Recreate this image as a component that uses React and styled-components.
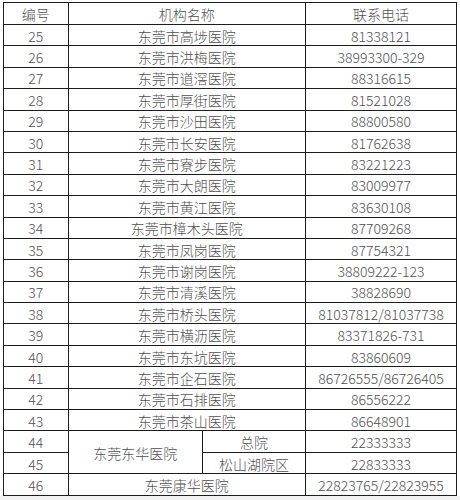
import React from 'react';
import styled, {createGlobalStyle} from 'styled-components';

const GlobalStyle = createGlobalStyle`
    html, body {
        margin: 0;
        padding: 0;
        background: #ffffff;
    }
`

const rowsBefore = [
    ['25', '东莞市高埗医院', '81338121'],
    ['26', '东莞市洪梅医院', '38993300-329'],
    ['27', '东莞市道滘医院', '88316615'],
    ['28', '东莞市厚街医院', '81521028'],
    ['29', '东莞市沙田医院', '88800580'],
    ['30', '东莞市长安医院', '81762638'],
    ['31', '东莞市寮步医院', '83221223'],
    ['32', '东莞市大朗医院', '83009977'],
    ['33', '东莞市黄江医院', '83630108'],
    ['34', '东莞市樟木头医院', '87709268'],
    ['35', '东莞市凤岗医院', '87754321'],
    ['36', '东莞市谢岗医院', '38809222-123'],
    ['37', '东莞市清溪医院', '38828690'],
    ['38', '东莞市桥头医院', '81037812/81037738'],
    ['39', '东莞市横沥医院', '83371826-731'],
    ['40', '东莞市东坑医院', '83860609'],
    ['41', '东莞市企石医院', '86726555/86726405'],
    ['42', '东莞市石排医院', '86556222'],
    ['43', '东莞市茶山医院', '86648901'],
]

export default function App() {
    return (
        <Page>
            <GlobalStyle />
            <Table>
                <colgroup>
                    <col style={{width: 64.5}} />
                    <col style={{width: 134.5}} />
                    <col style={{width: 103}} />
                    <col style={{width: 151}} />
                </colgroup>
                <tbody>
                    <TR header>
                        <TD>编号</TD>
                        <TD colSpan={2}>机构名称</TD>
                        <TD>联系电话</TD>
                    </TR>
                    {rowsBefore.map(row => (
                        <TR key={row[0]}>
                            <TD>{row[0]}</TD>
                            <TD colSpan={2}>{row[1]}</TD>
                            <TD>{row[2]}</TD>
                        </TR>
                    ))}
                    <TR>
                        <TD>44</TD>
                        <TD rowSpan={2}>东莞东华医院</TD>
                        <TD>总院</TD>
                        <TD>22333333</TD>
                    </TR>
                    <TR>
                        <TD>45</TD>
                        <TD>松山湖院区</TD>
                        <TD>22833333</TD>
                    </TR>
                    <TR>
                        <TD>46</TD>
                        <TD colSpan={2}>东莞康华医院</TD>
                        <TD>22823765/22823955</TD>
                    </TR>
                </tbody>
            </Table>
            <Footer />
        </Page>
    )
}

const Page = styled.div`
    padding: 2px 0 0 3px;
    width: 460px;
    height: 500px;
    box-sizing: border-box;
    display: flex;
    flex-direction: column;
    font-family: "Noto Sans CJK SC", "Liberation Sans", sans-serif;
`

const Table = styled.table`
    border-collapse: collapse;
    table-layout: fixed;
    width: 453px;
    color: #505050;
    font-size: 14px;
    font-weight: 300;
`

const TR = styled.tr`
    height: ${props => props.header ? '22px' : '21.4px'};
`

const TD = styled.td`
    border: 1px solid #1c1c1c;
    padding: 1px 0 0;
    text-align: center;
    vertical-align: middle;
    line-height: 16px;
    white-space: nowrap;
`

const Footer = styled.div`
    flex: 1;
    background: #f2f2f2;
    margin-left: -3px;
`
